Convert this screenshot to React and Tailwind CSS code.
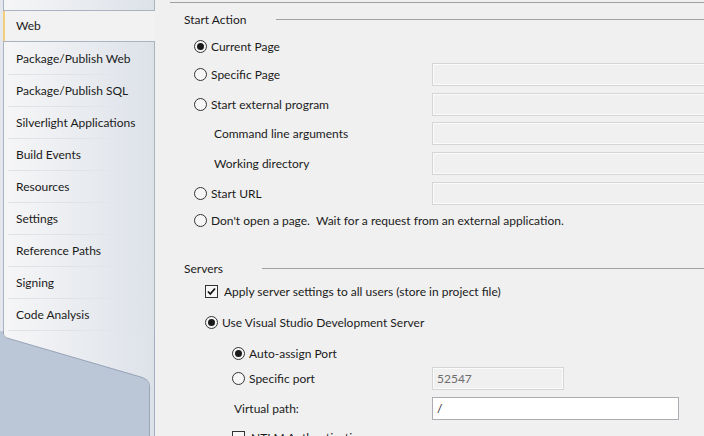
import { useState } from "react";

const FONT = "font-['Lato','Liberation_Sans',sans-serif]";

const tabs = [
  "Package/Publish Web",
  "Package/Publish SQL",
  "Silverlight Applications",
  "Build Events",
  "Resources",
  "Settings",
  "Reference Paths",
  "Signing",
  "Code Analysis",
];

const Radio = ({ checked }) => (
  <span className="w-[13px] h-[13px] rounded-full border border-[#333] bg-[#f6f6f6] flex items-center justify-center shrink-0">
    {checked && <span className="w-[7px] h-[7px] rounded-full bg-[#1a1a1a]" />}
  </span>
);

const Checkbox = ({ checked }) => (
  <span className="w-[13px] h-[13px] border border-[#333] bg-[#f6f6f6] flex items-center justify-center shrink-0">
    {checked && (
      <svg width="11" height="11" viewBox="0 0 11 11">
        <path d="M2 5.5 L4.3 8 L9 2.5" fill="none" stroke="#111" strokeWidth="1.8" />
      </svg>
    )}
  </span>
);

const DisabledInput = ({ className = "w-[300px]", value }) => (
  <div className={`h-[23px] border border-[#d5d5d5] bg-[#f0f0f0] shadow-[inset_0_0_0_1px_#fbfbfb] flex items-center pl-[4px] text-[#6d6d6d] shrink-0 ${className}`}>
    {value}
  </div>
);

const Row = ({ mt, pl, children, input }) => (
  <div className={`flex items-center h-[23px] shrink-0 ${mt}`}>
    <div className={`w-[277px] shrink-0 flex items-center ${pl}`}>{children}</div>
    {input}
  </div>
);

const Heading = ({ mt, label, gap }) => (
  <div className={`flex items-center h-[23px] shrink-0 pl-[29px] ${mt}`}>
    <span>{label}</span>
    <span className={`flex-1 h-px bg-[#a0a0a0] ${gap}`} />
  </div>
);

const Sidebar = () => (
  <aside className="w-[155px] shrink-0 h-full bg-[#e4e8ee] flex flex-col text-[#1b1b1b]">
    <div className="h-[11px] shrink-0 ml-[3px] border-l border-r border-b border-[#a9b3c2] bg-gradient-to-r from-[#f6f6f7] to-[#dde2e9]" />
    <div className="h-[30px] shrink-0 ml-[3px] border-l-2 border-[#f1cf7c] bg-[#f2f2f2] flex items-center pl-[11px]">
      Web
    </div>
    <div className="shrink-0 ml-[3px] border-l border-r border-t border-[#a9b3c2] bg-gradient-to-r from-[#f6f6f7] to-[#dde2e9] pt-px">
      {tabs.map((t) => (
        <div key={t} className="h-[32px] flex flex-col">
          <div className="flex-1 flex items-center pl-[12px]">{t}</div>
          <div className="h-px ml-[4px] mr-[16px] bg-gradient-to-r from-[#dfe2e7] via-[#dfe2e7] to-transparent" />
        </div>
      ))}
    </div>
    <svg className="flex-1 w-[155px]" viewBox="0 0 155 105" preserveAspectRatio="none">
      <defs>
        <linearGradient id="pg" gradientUnits="userSpaceOnUse" x1="3" y1="0" x2="155" y2="0">
          <stop offset="0" stopColor="#f6f6f7" />
          <stop offset="1" stopColor="#dde2e9" />
        </linearGradient>
      </defs>
      <path d="M0 0 L3 0 L3 3 Q3 6 7 7 L139 45 Q149 48 149 55 L149 105 L0 105 Z" fill="#bbc7d7" />
      <path d="M3 0 L3 3 Q3 6 7 7 L139 45 Q149 48 149 55 L149 105 L155 105 L155 0 Z" fill="url(#pg)" />
      <path d="M3.5 0 L3.5 3 Q3.5 6 7 7 L139 45.5 Q149.5 48 149.5 55 L149.5 105" fill="none" stroke="#98a5b8" strokeWidth="1" />
      <path d="M154.5 0 L154.5 105" stroke="#a3aebf" strokeWidth="1" />
    </svg>
  </aside>
);

export default function App() {
  const [action] = useState("current");

  return (
    <div className={`w-[704px] h-[436px] overflow-hidden flex bg-[#f0f0f0] text-[12px] leading-[16px] ${FONT}`}>
      <Sidebar />
      <main className="flex-1 min-w-0 h-full overflow-hidden flex flex-col text-[#1b1b1b]">
        <div className="mt-[2px] ml-[15px] h-px bg-[#a0a0a0] shrink-0" />

        {/* Start Action */}
        <Heading mt="mt-[5px]" label="Start Action" gap="ml-[30px]" />
        <Row mt="mt-[4px]" pl="pl-[39px] gap-[4px]">
          <Radio checked={action === "current"} />
          <span>Current Page</span>
        </Row>
        <Row mt="mt-[5px]" pl="pl-[39px] gap-[4px]" input={<DisabledInput />}>
          <Radio />
          <span>Specific Page</span>
        </Row>
        <Row mt="mt-[7px]" pl="pl-[39px] gap-[4px]" input={<DisabledInput />}>
          <Radio />
          <span>Start external program</span>
        </Row>
        <Row mt="mt-[6px]" pl="pl-[59px]" input={<DisabledInput />}>
          <span>Command line arguments</span>
        </Row>
        <Row mt="mt-[7px]" pl="pl-[59px]" input={<DisabledInput />}>
          <span>Working directory</span>
        </Row>
        <Row mt="mt-[7px]" pl="pl-[39px] gap-[4px]" input={<DisabledInput />}>
          <Radio />
          <span>Start URL</span>
        </Row>
        <div className="flex items-center h-[23px] shrink-0 mt-[4px] pl-[39px] gap-[4px] whitespace-pre">
          <Radio />
          <span>Don't open a page.  Wait for a request from an external application.</span>
        </div>

        {/* Servers */}
        <Heading mt="mt-[25px]" label="Servers" gap="ml-[39px]" />
        <div className="flex items-center h-[23px] shrink-0 pl-[50px] gap-[6px]">
          <Checkbox checked />
          <span>Apply server settings to all users (store in project file)</span>
        </div>
        <div className="flex items-center h-[23px] shrink-0 mt-[8px] pl-[50px] gap-[4px]">
          <Radio checked />
          <span>Use Visual Studio Development Server</span>
        </div>
        <Row mt="mt-[8px]" pl="pl-[77px] gap-[4px]">
          <Radio checked />
          <span>Auto-assign Port</span>
        </Row>
        <Row mt="mt-[2px]" pl="pl-[77px] gap-[4px]" input={<DisabledInput className="w-[132px]" value="52547" />}>
          <Radio />
          <span>Specific port</span>
        </Row>
        <Row
          mt="mt-[7px]"
          pl="pl-[79px]"
          input={
            <div className="w-[247px] h-[23px] border border-[#abadb3] bg-white flex items-center pl-[4px] shrink-0">/</div>
          }
        >
          <span>Virtual path:</span>
        </Row>
        <div className="flex items-center h-[23px] shrink-0 mt-[6px] pl-[77px] gap-[6px]">
          <Checkbox />
          <span>NTLM Authentication</span>
        </div>
      </main>
    </div>
  );
}
